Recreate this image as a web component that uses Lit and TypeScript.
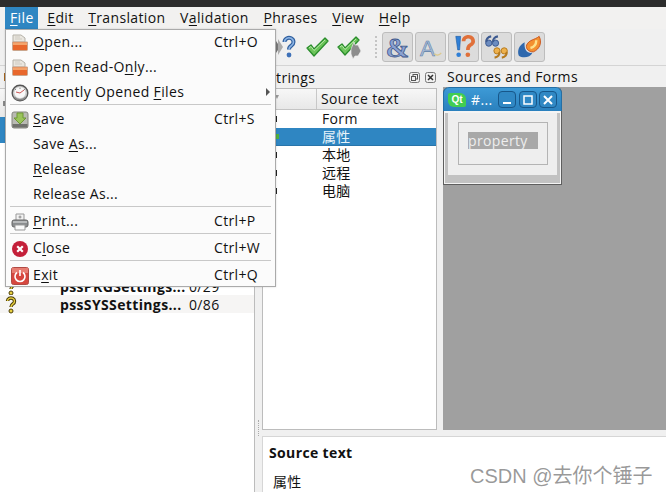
import { LitElement, html, css, svg } from "lit";
import { customElement } from "lit/decorators.js";

const u = (t: string, i: number) => html`${t.slice(0, i)}<u>${t[i]}</u>${t.slice(i + 1)}`;

const folder = svg`<svg width="18" height="18" viewBox="0 0 18 18"><path d="M2 1h8l4 3v4H2z" fill="#e9e6df" stroke="#b5b1a8"/><path d="M4 3h5M4 5h7" stroke="#cfcbc2"/><path d="M1.500 8h15v7.500a1 1 0 0 1-1 1h-13a1 1 0 0 1-1-1z" fill="#e8672c" stroke="#c9a68e"/><path d="M2 8.500h14V11H2z" fill="#f4a46c"/></svg>`;
const clock = svg`<svg width="18" height="18" viewBox="0 0 18 18"><circle cx="9" cy="9" r="7.800" fill="#ccc" stroke="#555" stroke-width="1.400"/><circle cx="9" cy="8.500" r="5.500" fill="#f8f8f8"/><path d="M9 9l4-3M9 9L5 8" stroke="#c55" stroke-width="1"/><path d="M4 5l1 1M9 3.500v1.500M14 5l-1 1" stroke="#888"/><path d="M3 13a8 8 0 0 0 12 0" fill="none" stroke="#888" stroke-width="1.500"/></svg>`;
const save = svg`<svg width="18" height="18" viewBox="0 0 18 18"><rect x="1" y="1" width="16" height="16" rx="2" fill="#b9bab3" stroke="#85867f"/><rect x="1.500" y="13" width="15" height="3.500" fill="#70716c"/><path d="M6 2h6v5h3l-6 6-6-6h3z" fill="#9ac45a" stroke="#6d9834"/></svg>`;
const print = svg`<svg width="18" height="18" viewBox="0 0 18 18"><path d="M5 1h8v7H5z" fill="#f2f2f2" stroke="#999"/><path d="M7.500 4h3M9 2.500v3" stroke="#888"/><rect x="1" y="7" width="16" height="7" rx="2" fill="#8a8d8f" stroke="#666"/><rect x="2" y="8" width="14" height="2" fill="#b8babb"/><path d="M4 12h10v5H4z" fill="#fafafa" stroke="#999"/></svg>`;
const close = svg`<svg width="18" height="18" viewBox="0 0 18 18"><circle cx="9" cy="9" r="8" fill="#c4203a"/><path d="M6.200 6.200l5.600 5.600M11.800 6.200l-5.600 5.600" stroke="#fff" stroke-width="2.200"/></svg>`;
const exit = svg`<svg width="18" height="18" viewBox="0 0 18 18"><rect x=".5" y=".5" width="17" height="17" rx="2" fill="#d6473f" stroke="#b04a44"/><path d="M1 1h16v5H1z" fill="#e87d72"/><path d="M6 5.500a5 5 0 1 0 6 0" fill="none" stroke="#fff" stroke-width="1.600"/><path d="M9 3v6" stroke="#fff" stroke-width="1.600"/></svg>`;

const items: any[] = [
  { i: folder, t: "Open...", k: 0, s: "Ctrl+O" },
  { i: folder, t: "Open Read-Only...", k: 11 },
  { i: clock, t: "Recently Opened Files", k: 16, sub: true },
  "sep",
  { i: save, t: "Save", k: 0, s: "Ctrl+S" },
  { t: "Save As...", k: 5 },
  { t: "Release", k: 0 },
  { t: "Release As..." },
  "sep",
  { i: print, t: "Print...", k: 0, s: "Ctrl+P" },
  "sep",
  { i: close, t: "Close", k: 1, s: "Ctrl+W" },
  "sep",
  { i: exit, t: "Exit", k: 1, s: "Ctrl+Q" },
];

const question = svg`<svg width="12" height="18" viewBox="0 0 12 18"><path d="M2.500 5a3.500 3.200 0 1 1 5.500 2.800c-1.500 1-2 1.700-2 3.200" fill="none" stroke="#4a3c08" stroke-width="3.400"/><path d="M2.500 5a3.500 3.200 0 1 1 5.500 2.800c-1.500 1-2 1.700-2 3.200" fill="none" stroke="#e8d040" stroke-width="1.400"/><circle cx="6" cy="15" r="2" fill="#e8d040" stroke="#4a3c08"/></svg>`;

const check = svg`<path d="M2 12l4-3 3 4L20 2l3 3L9 20z" fill="#6cc45a" stroke="#2a8d2c" stroke-width="1.300" stroke-linejoin="round"/><path d="M4 12l2-1.500 3 4L20 4" fill="none" stroke="#b8e8a8"/>`;

const tbIcons = [
  svg`<svg width="20" height="24" viewBox="0 0 20 24"><path d="M0 6l4 6-4 6z" fill="#777"/><path d="M2 4l5 8-5 8z" fill="#aaa"/><path d="M8.500 7a4.500 4.200 0 1 1 7 3.500c-2 1.300-2.500 2-2.500 4" fill="none" stroke="#2f5f9e" stroke-width="4"/><path d="M8.500 7a4.500 4.200 0 1 1 7 3.500c-2 1.300-2.500 2-2.500 4" fill="none" stroke="#8fb6e6" stroke-width="1.600"/><circle cx="13" cy="20" r="2.400" fill="#3e71b8"/></svg>`,
  svg`<svg width="25" height="22" viewBox="0 0 25 22">${check}</svg>`,
  svg`<svg width="26" height="24" viewBox="0 0 26 24">${check}<path d="M15 14l3-7 1 3 3 0 3 6-3 5-3 0-2 3-2-5z" fill="#8d8d8d" stroke="#eee" stroke-width=".7"/></svg>`,
];

const tbToggle = [
  svg`<text x="15" y="24" font-family="Liberation Serif" font-weight="bold" font-size="29" text-anchor="middle" fill="#8ba2d2" stroke="#3a5488" stroke-width=".8">&amp;</text>`,
  svg`<text x="12" y="23" font-family="Liberation Sans" font-size="23" text-anchor="middle" fill="#a9bdd8" stroke="#5d7ea8" stroke-width=".6">A</text><path d="M19 21c2 2 5 2 7-1" fill="none" stroke="#dcc98e" stroke-width="1.500"/>`,
  svg`<path d="M7 3h5l-1 14H9z" fill="#2f7fd6" stroke="#1d5aa0" stroke-width=".6"/><circle cx="10" cy="22" r="2.400" fill="#2f7fd6"/><path d="M15 8a5 4.500 0 1 1 7 4c-2 1-2.500 2-2.500 5" fill="none" stroke="#e0703a" stroke-width="3.800"/><circle cx="19.500" cy="22" r="2.400" fill="#e0703a"/>`,
  svg`<circle cx="7" cy="10" r="3.200" fill="#6c8cc0" stroke="#3d5a90"/><path d="M4.500 9C4 6 6 3.500 9.500 3" fill="none" stroke="#3d5a90" stroke-width="2.200"/><circle cx="14" cy="10" r="3.200" fill="#6c8cc0" stroke="#3d5a90"/><path d="M11.500 9c-.500-3 1.500-5.500 5-6" fill="none" stroke="#3d5a90" stroke-width="2.200"/><circle cx="15.500" cy="18" r="3.200" fill="#eeb14c" stroke="#b5791c"/><path d="M18 19c.500 3-1.500 5.500-5 6" fill="none" stroke="#b5791c" stroke-width="2.200"/><circle cx="23" cy="18" r="3.200" fill="#eeb14c" stroke="#b5791c"/><path d="M25.500 19c.500 3-1.500 5.500-5 6" fill="none" stroke="#b5791c" stroke-width="2.200"/>`,
  svg`<path d="M25 3c3 6 1 13-6 16-5 0-8-3-7-7 3-6 8-5 13-9z" fill="#f3902f" stroke="#c9541c"/><path d="M22 7c0 4-2 7-6 8" stroke="#fde08a" stroke-width="2.500" fill="none"/><path d="M10 9c-6 3-8 9-6 14 4 3 12 2 14-3-5 1-9-3-8-11z" fill="#2f68ad"/>`,
];

const ctxTail = [
  ["?", "pssPKGSettings...", "0/29"],
  ["?", "pssSYSSettings...", "0/86"],
];
const strRows = [
  { t: "Form", m: "dot" },
  { t: "属性", m: "ok", sel: true },
  { t: "本地", m: "dot" },
  { t: "远程", m: "dot" },
  { t: "电脑", m: "dot" },
];

@customElement("app-root")
export class AppRoot extends LitElement {
  static styles = css`
    :host { display: block; width: 666px; height: 492px; overflow: hidden; position: relative; background: #f0f0f0; font-family: "Open Sans", "Noto Sans CJK SC", sans-serif; font-size: 14px; letter-spacing: .36px; color: #111; }
    svg { display: block; }
    u { text-underline-offset: 2px; text-decoration-thickness: 1px; }
    .titlebar { height: 7px; background: #2c2c2c; }
    .menubar { height: 22px; display: flex; background: #f2f1f0; padding-left: 5px; line-height: 22px; }
    .menubar span { padding: 0 7.300px; }
    .menubar .on { background: #2f86c2; color: #fff; width: 33px; padding: 0 0 0 5px; box-sizing: border-box; margin-right: 2px; }
    .toolbar { height: 36px; border-bottom: 1px solid #d4d4d4; display: flex; align-items: center; padding-left: 276px; background: #f0f0f0; }
    .tb { width: 20px; margin-right: 9px; display: flex; justify-content: flex-start; }
    .tb.b { width: 26px; margin-right: 5px; }
    .grip { width: 3px; height: 22px; margin: 0 4px 0 8px; border-left: 2px dotted #c4c4c4; box-sizing: border-box; }
    .tg { width: 31px; height: 30px; margin-right: 2px; border: 1px solid #bdbdbd; border-radius: 3px; background: #dcdcdc; display: flex; align-items: center; justify-content: center; box-sizing: border-box; }
    .main { display: grid; grid-template-columns: 255px 7px 175px 6px 223px; grid-template-rows: 370px 56px; height: 426px; }
    .ctx { grid-column: 1; grid-row: 1 / 3; background: #fff; border-right: 1px solid #bcbcbc; overflow: hidden; display: flex; flex-direction: column; }
    .chead { height: 22px; background: #f0f0f0; display: flex; align-items: center; padding-left: 4px; flex: none; }
    .orange { width: 2px; height: 8px; background: #a8651c; }
    .cthead { height: 29px; background: linear-gradient(#f7f7f7, #e8e8e8); border-top: 1px solid #c8c8c8; box-sizing: border-box; flex: none; display: flex; align-items: center; padding-left: 3px; }
    .greymark { width: 3px; height: 5px; background: #888; }
    .cgap { height: 134px; flex: none; }
    .csel { height: 26px; background: #2f86c2; flex: none; }
    .crow { height: 18px; display: flex; align-items: center; line-height: 18px; flex: none; padding-top: 1px; box-sizing: border-box; }
    .crow.alt { background: #f6f5f4; }
    .crow .q { width: 60px; padding-left: 5px; box-sizing: border-box; }
    .crow b { width: 129px; white-space: nowrap; font-weight: 700; }
    .split1 { grid-column: 2; grid-row: 1 / 3; display: flex; justify-content: center; align-items: flex-end; }
    .dots { width: 0; height: 16px; margin-bottom: 56px; border-left: 1px dotted #aaa; }
    .split2 { grid-column: 4; grid-row: 1; }
    .strings { grid-column: 3; grid-row: 1; display: flex; flex-direction: column; min-height: 0; }
    .dockhead { height: 22px; flex: none; display: flex; align-items: center; line-height: 24px; justify-content: space-between; padding: 1px 0 0 6px; box-sizing: border-box; }
    .dockbtns { display: flex; gap: 5px; margin-right: 1px; }
    .list { flex: 1; background: #fff; border: 1px solid #bcbcbc; margin-bottom: 6px; overflow: hidden; }
    .thead { height: 20px; display: flex; background: linear-gradient(#f7f7f7, #e8e8e8); border-bottom: 1px solid #c4c4c4; line-height: 20px; }
    .thead .c1 { width: 54px; border-right: 1px solid #c8c8c8; padding: 6px 0 0 12px; box-sizing: border-box; }
    .thead .c2 { padding-left: 4px; }
    .sort { display: block; width: 0; height: 0; border-left: 2px solid transparent; border-right: 2px solid transparent; border-top: 4px solid #999; }
    .row { height: 18px; line-height: 18px; display: flex; align-items: center; }
    .mk { width: 59px; padding-left: 12px; box-sizing: border-box; flex: none; }
    .mk i { display: block; width: 2px; height: 6px; background: #222; }
    .mk i.ok { width: 4px; height: 5px; background: #4fae3e; }
    .row.sel { background: #2f86c2; color: #e8f3fa; border-bottom: 1px solid #2975aa; box-sizing: border-box; }
    .sources { grid-column: 5; grid-row: 1; display: flex; flex-direction: column; min-height: 0; }
    .sources .dockhead { height: 21px; padding-left: 4px; }
    .mdi { flex: 1; background: #a0a0a0; margin-bottom: 6px; position: relative; }
    .sub { position: absolute; left: 0; top: 0; width: 119px; height: 98px; background: #f4f4f4; border: 1px solid #5e5e5e; border-top: 0; box-sizing: border-box; border-radius: 6px 6px 0 0; }
    .subtitle { height: 24px; margin: 0 -1px; background: linear-gradient(#3d9ad6, #2a80bd); border-radius: 6px 6px 0 0; border: 1px solid #256fa5; border-bottom: 0; box-sizing: border-box; display: flex; align-items: center; color: #fff; padding-left: 4px; }
    .qt { width: 18px; height: 14px; background: #41cd52; border-radius: 2px 6px 2px 6px; font-size: 10px; line-height: 14px; text-align: center; color: #fff; font-family: "Liberation Sans", sans-serif; font-weight: bold; letter-spacing: 0; flex: none; }
    .subtitle .name { margin-left: 5px; width: 27px; line-height: 18px; overflow: hidden; white-space: nowrap; flex: none; }
    .wb { width: 18px; height: 17px; border: 1px solid #17578a; border-radius: 4px; box-sizing: border-box; margin-right: 2.500px; background: #3088c4; display: flex; align-items: center; justify-content: center; flex: none; }
    .form { margin: 2px 1px 0; height: 70px; padding: 9px 10px; background: #eee; box-sizing: border-box; border: 3px solid #c2c2c2; border-width: 0 3px 8px; }
    .group { width: 90px; height: 43px; border: 1px solid #b4b4b4; box-sizing: border-box; padding: 9px; }
    .lbl { width: 70px; height: 17px; background: #a8a8a8; color: #eee; line-height: 17px; overflow: hidden; white-space: nowrap; }
    .bottom { grid-column: 3 / 6; grid-row: 2; border-top: 1px solid #d6d6d6; border-left: 1px solid #d6d6d6; background: #fff; padding: 7px 6px; overflow: hidden; }
    .bottom b { display: block; line-height: 18px; }
    .bottom div { margin-top: 11px; line-height: 18px; padding-left: 4px; }
    .menu { position: absolute; left: 5px; top: 29px; width: 271px; height: 258px; overflow: hidden; background: #fbfbfb; border: 1px solid #aaa; box-sizing: border-box; box-shadow: 0 0 2px rgba(0,0,0,.15); }
    .mi { height: 25px; display: flex; align-items: center; line-height: 23px; position: relative; white-space: nowrap; }
    .mi .ic { width: 27px; padding-left: 5px; box-sizing: border-box; }
    .mi .tx { flex: 1; padding-bottom: 2px; }
    .mi .sc { position: absolute; left: 208px; top: 0; }
    .arrow { position: absolute; right: 5px; top: 8px; width: 0; height: 0; border-left: 4px solid #555; border-top: 4px solid transparent; border-bottom: 4px solid transparent; }
    .sep { height: 1px; background: #c8c8c8; margin: -1px 4px 2px; position: relative; }
    .wm { position: absolute; left: 470px; top: 460px; font-family: "Liberation Sans", "Noto Sans CJK SC", sans-serif; font-size: 20px; letter-spacing: 0; color: rgba(120,120,120,.75); white-space: nowrap; }
  `;

  render() {
    return html`
      <div class="titlebar"></div>
      <div class="menubar">
        <span class="on">${u("File", 0)}</span><span>${u("Edit", 0)}</span><span>${u("Translation", 0)}</span><span>${u("Validation", 1)}</span><span>${u("Phrases", 0)}</span><span>${u("View", 0)}</span><span>${u("Help", 0)}</span>
      </div>
      <div class="toolbar">
        <div class="tb">${tbIcons[0]}</div>
        <div class="tb b">${tbIcons[1]}</div>
        <div class="tb b">${tbIcons[2]}</div>
        <div class="grip"></div>
        ${tbToggle.map((p) => html`<div class="tg"><svg width="30" height="28" viewBox="0 0 30 28">${p}</svg></div>`)}
      </div>
      <div class="main">
        <div class="ctx">
          <div class="chead"><span class="orange"></span></div>
          <div class="cthead"><span class="greymark"></span></div>
          <div class="csel"></div>
          <div class="cgap"></div>
          ${ctxTail.map((r, i) => html`<div class="crow ${i ? "alt" : ""}"><span class="q">${question}</span><b>${r[1]}</b><span>${r[2]}</span></div>`)}
        </div>
        <div class="split1"><div class="dots"></div></div>
        <div class="strings">
          <div class="dockhead"><span>Strings</span><span class="dockbtns">${this.dockBtn(0)}${this.dockBtn(1)}</span></div>
          <div class="list">
            <div class="thead"><span class="c1"><i class="sort"></i></span><span class="c2">Source text</span></div>
            ${strRows.map((r) => html`<div class="row ${r.sel ? "sel" : ""}"><span class="mk"><i class="${r.m === "ok" ? "ok" : ""}"></i></span><span>${r.t}</span></div>`)}
          </div>
        </div>
        <div class="split2"></div>
        <div class="sources">
          <div class="dockhead"><span>Sources and Forms</span></div>
          <div class="mdi">
            <div class="sub">
              <div class="subtitle"><span class="qt">Qt</span><span class="name">#...</span>
                <span class="wb"><svg width="10" height="10"><path d="M1 8h8" stroke="#fff" stroke-width="2"/></svg></span>
                <span class="wb"><svg width="10" height="10"><rect x="1" y="1" width="8" height="8" fill="none" stroke="#fff" stroke-width="1.500"/></svg></span>
                <span class="wb"><svg width="10" height="10"><path d="M1 1l8 8M9 1l-8 8" stroke="#fff" stroke-width="2"/></svg></span>
              </div>
              <div class="form"><div class="group"><div class="lbl">property</div></div></div>
            </div>
          </div>
        </div>
        <div class="bottom"><b>Source text</b><div>属性</div></div>
      </div>
      <div class="menu">
        ${items.map((m) => m === "sep" ? html`<div class="sep"></div>` : html`<div class="mi"><span class="ic">${m.i ?? ""}</span><span class="tx">${m.k !== undefined ? u(m.t, m.k) : m.t}</span>${m.s ? html`<span class="sc">${m.s}</span>` : ""}${m.sub ? html`<span class="arrow"></span>` : ""}</div>`)}
      </div>
      <div class="wm">CSDN @去你个锤子</div>
    `;
  }

  dockBtn(kind: number) {
    return kind === 0
      ? svg`<svg width="11" height="11" viewBox="0 0 11 11"><rect x=".5" y=".5" width="10" height="10" rx="2" fill="none" stroke="#777"/><rect x="4" y="2.500" width="4.500" height="4.500" fill="none" stroke="#555"/><rect x="2.500" y="4.500" width="4" height="4" fill="#eee" stroke="#555"/></svg>`
      : svg`<svg width="11" height="11" viewBox="0 0 11 11"><rect x=".5" y=".5" width="10" height="10" rx="2" fill="none" stroke="#777"/><path d="M3 3l5 5M8 3l-5 5" stroke="#333" stroke-width="1.500"/></svg>`;
  }
}
